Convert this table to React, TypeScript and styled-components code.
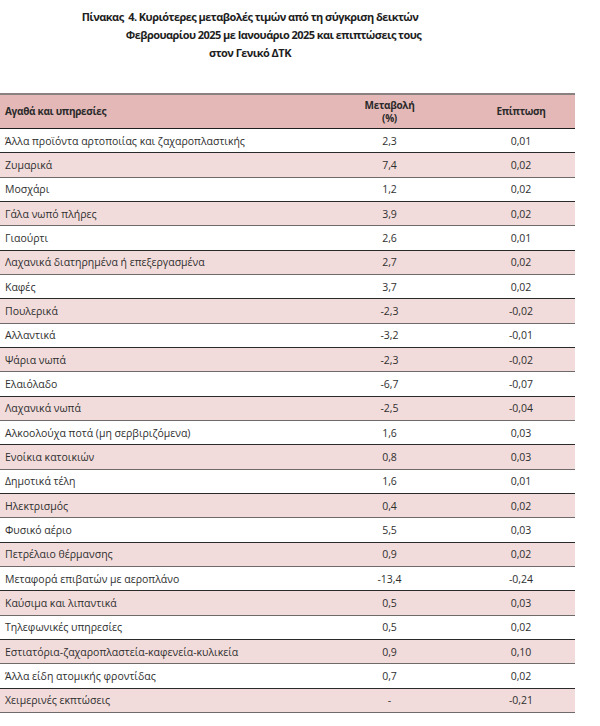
import React from "react";
import styled, { createGlobalStyle } from "styled-components";

const Global = createGlobalStyle`
  html, body { margin: 0; padding: 0; background: #ffffff; }
  body { font-family: "Open Sans", "Noto Sans", "DejaVu Sans", sans-serif; color: #2b2b2b; }
`;

const Page = styled.div`
  width: 600px;
  height: 726px;
  overflow: hidden;
  background: #fff;
`;

const Title = styled.div`
  padding-top: 8px;
  height: 93px;
  box-sizing: border-box;
  font-family: "Open Sans", "Noto Sans", sans-serif;
  font-weight: 700;
  font-size: 11px;
  letter-spacing: -0.55px;
  color: #1e1e1e;
`;

const TitleLine = styled.div<{ $shift: number }>`
  height: 18px;
  line-height: 18px;
  text-align: center;
  width: 500px;
  padding-left: ${(p) => p.$shift}px;
  box-sizing: border-box;
  white-space: nowrap;
`;

const Table = styled.div`
  width: 575px;
  font-family: "Open Sans", "Noto Sans", sans-serif;
  font-size: 10.5px;
`;

const HeaderRow = styled.div`
  display: grid;
  grid-template-columns: 312px 155px 108px;
  height: 36px;
  box-sizing: border-box;
  background: #e4b8b7;
  border-top: 2px solid #8a8080;
  border-bottom: 1.5px solid #1f1f1f;
  font-weight: 700;
  font-size: 10px;
  letter-spacing: -0.3px;
  color: #2a2a2a;
`;

const HeadCell = styled.div<{ $align: "left" | "center" }>`
  display: flex;
  flex-direction: column;
  justify-content: center;
  align-items: ${(p) => (p.$align === "left" ? "flex-start" : "center")};
  padding-left: ${(p) => (p.$align === "left" ? "5px" : "0")};
  line-height: 13px;
  text-align: center;
`;

const Row = styled.div<{ $shaded: boolean }>`
  display: grid;
  grid-template-columns: 312px 155px 108px;
  height: 24.33px;
  box-sizing: border-box;
  background: ${(p) => (p.$shaded ? "#f2dcdb" : "#ffffff")};
  border-bottom: 1.5px solid ${(p) => (p.$shaded ? "#6f6a6a" : "#2a2a2a")};
  align-items: center;
  color: #2f2f2f;
`;

const Cell = styled.div<{ $align: "left" | "center" }>`
  text-align: ${(p) => p.$align};
  padding-left: ${(p) => (p.$align === "left" ? "5px" : "0")};
  white-space: nowrap;
`;

const rows: [string, string, string][] = [
  ["Άλλα προϊόντα αρτοποιίας και ζαχαροπλαστικής", "2,3", "0,01"],
  ["Ζυμαρικά", "7,4", "0,02"],
  ["Μοσχάρι", "1,2", "0,02"],
  ["Γάλα νωπό πλήρες", "3,9", "0,02"],
  ["Γιαούρτι", "2,6", "0,01"],
  ["Λαχανικά διατηρημένα ή επεξεργασμένα", "2,7", "0,02"],
  ["Καφές", "3,7", "0,02"],
  ["Πουλερικά", "-2,3", "-0,02"],
  ["Αλλαντικά", "-3,2", "-0,01"],
  ["Ψάρια νωπά", "-2,3", "-0,02"],
  ["Ελαιόλαδο", "-6,7", "-0,07"],
  ["Λαχανικά νωπά", "-2,5", "-0,04"],
  ["Αλκοολούχα ποτά (μη σερβιριζόμενα)", "1,6", "0,03"],
  ["Ενοίκια κατοικιών", "0,8", "0,03"],
  ["Δημοτικά τέλη", "1,6", "0,01"],
  ["Ηλεκτρισμός", "0,4", "0,02"],
  ["Φυσικό αέριο", "5,5", "0,03"],
  ["Πετρέλαιο θέρμανσης", "0,9", "0,02"],
  ["Μεταφορά επιβατών με αεροπλάνο", "-13,4", "-0,24"],
  ["Καύσιμα και λιπαντικά", "0,5", "0,03"],
  ["Τηλεφωνικές υπηρεσίες", "0,5", "0,02"],
  ["Εστιατόρια-ζαχαροπλαστεία-καφενεία-κυλικεία", "0,9", "0,10"],
  ["Άλλα είδη ατομικής φροντίδας", "0,7", "0,02"],
  ["Χειμερινές εκπτώσεις", "-", "-0,21"],
];

export default function App() {
  return (
    <Page>
      <Global />
      <Title>
        <TitleLine $shift={0}>Πίνακας&nbsp; 4. Κυριότερες μεταβολές τιμών από τη σύγκριση δεικτών</TitleLine>
        <TitleLine $shift={47}>Φεβρουαρίου 2025 με Ιανουάριο 2025 και επιπτώσεις τους</TitleLine>
        <TitleLine $shift={0}>στον Γενικό ΔΤΚ</TitleLine>
      </Title>
      <Table>
        <HeaderRow>
          <HeadCell $align="left">Αγαθά και υπηρεσίες</HeadCell>
          <HeadCell $align="center">
            <span>Μεταβολή</span>
            <span>(%)</span>
          </HeadCell>
          <HeadCell $align="center">Επίπτωση</HeadCell>
        </HeaderRow>
        {rows.map(([name, change, impact], i) => (
          <Row key={name} $shaded={i % 2 === 1}>
            <Cell $align="left">{name}</Cell>
            <Cell $align="center">{change}</Cell>
            <Cell $align="center">{impact}</Cell>
          </Row>
        ))}
      </Table>
    </Page>
  );
}
